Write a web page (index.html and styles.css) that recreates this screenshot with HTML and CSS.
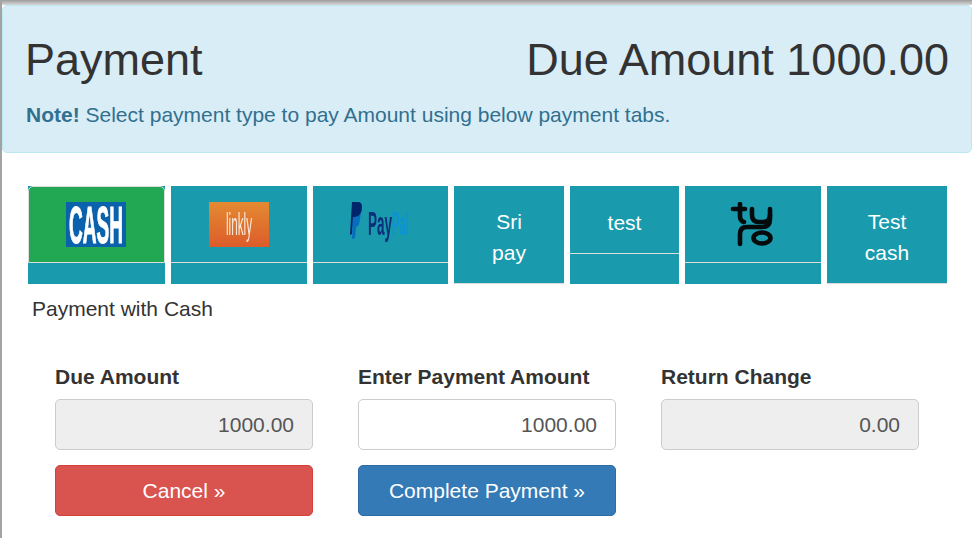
FILE: index.html
```html
<!DOCTYPE html>
<html lang="en">
<head>
    <meta charset="UTF-8">
    <meta name="viewport" content="width=device-width, initial-scale=1.0">
    <title>Payment</title>
    <link rel="stylesheet" href="styles.css">
</head>
<body>
    <div class="page">
        <div class="alert">
            <div class="alert-head">
                <h1>Payment</h1>
                <h1>Due Amount 1000.00</h1>
            </div>
            <p><strong>Note!</strong> Select payment type to pay Amount using below payment tabs.</p>
        </div>

        <div class="tabs">
            <div class="tab tab-1">
                <a class="tab-link active">
                    <svg class="logo soft" viewBox="0 0 60 45">
                        <defs>
                            <linearGradient id="linkly-bg" x1="0" y1="0" x2="0" y2="1">
                                <stop offset="0" stop-color="#e48a31"/>
                                <stop offset="1" stop-color="#dc5c2a"/>
                            </linearGradient>
                        </defs>
                        <rect width="60" height="45" fill="#0a62ac"/>
                        <text class="cash-text" x="3" y="41" textLength="54" lengthAdjust="spacingAndGlyphs">CASH</text>
                    </svg>
                </a>
            </div>
            <div class="tab tab-2">
                <a class="tab-link">
                    <svg class="logo soft" viewBox="0 0 60 45">
                        <rect width="60" height="45" fill="url(#linkly-bg)"/>
                        <text class="linkly-text" x="17" y="33" textLength="26" lengthAdjust="spacingAndGlyphs">linkly</text>
                    </svg>
                </a>
            </div>
            <div class="tab tab-3">
                <a class="tab-link">
                    <svg class="logo soft" viewBox="0 0 60 45">
                        <path d="M4 5l8-1q-1 13-8 15l-1 6-2-4z" fill="#0076c4"/>
                        <path d="M2 0h6q4 0 4 5 0 9-7 10l-2 0-1 17-2 1z" fill="#00256b"/>
                        <path d="M3 15h3q4-1 5-4l-2 11q-1 3-3 3l-1 11-3 1z" fill="#0a6cc0"/>
                        <text class="pp-pay" x="18" y="33" textLength="24" lengthAdjust="spacingAndGlyphs">Pay</text>
                        <text class="pp-pal" x="42" y="33" textLength="17" lengthAdjust="spacingAndGlyphs">Pal</text>
                    </svg>
                </a>
            </div>
            <div class="tab tab-4">
                <a class="tab-link text-link full">Sri<br>pay</a>
            </div>
            <div class="tab tab-5">
                <a class="tab-link text-link short">test</a>
            </div>
            <div class="tab tab-6">
                <a class="tab-link">
                    <svg class="logo soft" viewBox="0 0 60 45">
                        <g fill="none" stroke="#050a0c" stroke-width="4.6" stroke-linecap="round">
                            <path d="M17 2v12q0 5 4 6"/>
                            <path d="M10 7h12"/>
                            <path d="M29 7v6q0 7 7 7h4q7 0 7-7v-6"/>
                            <path d="M47 13v4q0 8-8 8h-15q-7 0-7 7v10"/>
                            <ellipse cx="39" cy="36" rx="8.5" ry="5.5"/>
                        </g>
                    </svg>
                </a>
            </div>
            <div class="tab tab-7">
                <a class="tab-link text-link full">Test<br>cash</a>
            </div>
        </div>

        <p class="pay-title">Payment with Cash</p>

        <div class="form-row">
            <div class="form-col">
                <label>Due Amount</label>
                <input class="field" type="text" value="1000.00" readonly>
                <button class="btn btn-cancel">Cancel »</button>
            </div>
            <div class="form-col">
                <label>Enter Payment Amount</label>
                <input class="field editable" type="text" value="1000.00">
                <button class="btn btn-complete">Complete Payment »</button>
            </div>
            <div class="form-col">
                <label>Return Change</label>
                <input class="field" type="text" value="0.00" readonly>
            </div>
        </div>
    </div>
</body>
</html>
```

FILE: styles.css
```css
* {
    box-sizing: border-box;
}
html, body {
    height: 100%;
}
body {
    font-family: "Liberation Sans", Arial, sans-serif;
    margin: 0;
    padding: 0;
    background-color: white;
    color: #333;
    overflow: hidden;
}
.page {
    height: 100%;
    padding-top: 5px;
    border-left: 2px solid #a3a3a3;
    background: linear-gradient(#9c9c9c, #d8d8d8 5px, white 5px);
}
.alert {
    height: 148px;
    padding: 29px 22px 0 22px;
    background-color: #d9edf7;
    border: 1px solid #bce8f1;
    border-radius: 5px;
    color: #31708f;
}
.alert-head {
    display: flex;
    justify-content: space-between;
}
h1 {
    margin: 0;
    font-size: 45px;
    line-height: 50px;
    font-weight: normal;
    color: #333;
}
.alert p {
    margin: 16px 0 0;
    padding-left: 1px;
    font-size: 21px;
    line-height: 28px;
}
.tabs {
    display: flex;
    gap: 6px;
    margin: 33px 0 0 26px;
}
.tab {
    height: 98px;
    background-color: #1a9aad;
}
.tab-1 { width: 137px; }
.tab-2, .tab-3 { width: 135.5px; }
.tab-4 { width: 110px; }
.tab-5 { width: 109px; }
.tab-6 { width: 136px; }
.tab-7 { width: 120px; }
.tab-link {
    display: flex;
    justify-content: center;
    align-items: flex-start;
    height: 77px;
    padding-top: 16px;
    border-bottom: 1px solid #ddd;
}
.tab-link.active {
    background-color: #22a753;
    border: 1px solid #ddd;
    border-radius: 5px 5px 0 0;
    padding: 15px 1px 0 0;
}
.text-link {
    color: white;
    font-size: 21px;
    line-height: 31px;
    text-align: center;
    padding-top: 21px;
}
.text-link.full {
    height: 98px;
    padding-top: 20px;
}
.text-link.short {
    height: 68px;
}
.logo {
    display: block;
    width: 60px;
    height: 45px;
}
.soft {
    filter: blur(0.4px);
}
.cash-text, .pp-pay, .pp-pal {
    font-family: "Liberation Sans", sans-serif;
    font-weight: bold;
}
.cash-text {
    font-size: 52px;
    fill: white;
    stroke: white;
    stroke-width: 1.2px;
}
.linkly-text {
    font-family: "Liberation Sans", sans-serif;
    font-size: 32px;
    fill: #fbeadc;
}
.pp-pay, .pp-pal {
    font-size: 33px;
}
.pp-pay {
    fill: #0b2f7a;
}
.pp-pal {
    fill: #0a93d6;
}
.pay-title {
    margin: 12px 0 0 30px;
    font-size: 21px;
    line-height: 26px;
}
.form-row {
    display: flex;
    gap: 45px;
    margin: 41px 0 0 53px;
}
.form-col {
    display: flex;
    flex-direction: column;
    width: 258px;
}
label {
    font-size: 21px;
    font-weight: bold;
    line-height: 28px;
    margin-bottom: 8px;
}
.field {
    width: 100%;
    height: 51px;
    padding: 0 18px;
    font-family: inherit;
    font-size: 21px;
    color: #555;
    text-align: right;
    background-color: #eee;
    border: 1px solid #ccc;
    border-radius: 5px;
    outline: none;
}
.field.editable {
    background-color: white;
}
.btn {
    height: 51px;
    margin-top: 15px;
    padding: 0;
    font-family: inherit;
    font-size: 21px;
    color: white;
    border: 1px solid;
    border-radius: 5px;
    cursor: pointer;
}
.btn-cancel {
    background-color: #d9534f;
    border-color: #d43f3a;
}
.btn-complete {
    background-color: #337ab7;
    border-color: #2e6da4;
}
```
